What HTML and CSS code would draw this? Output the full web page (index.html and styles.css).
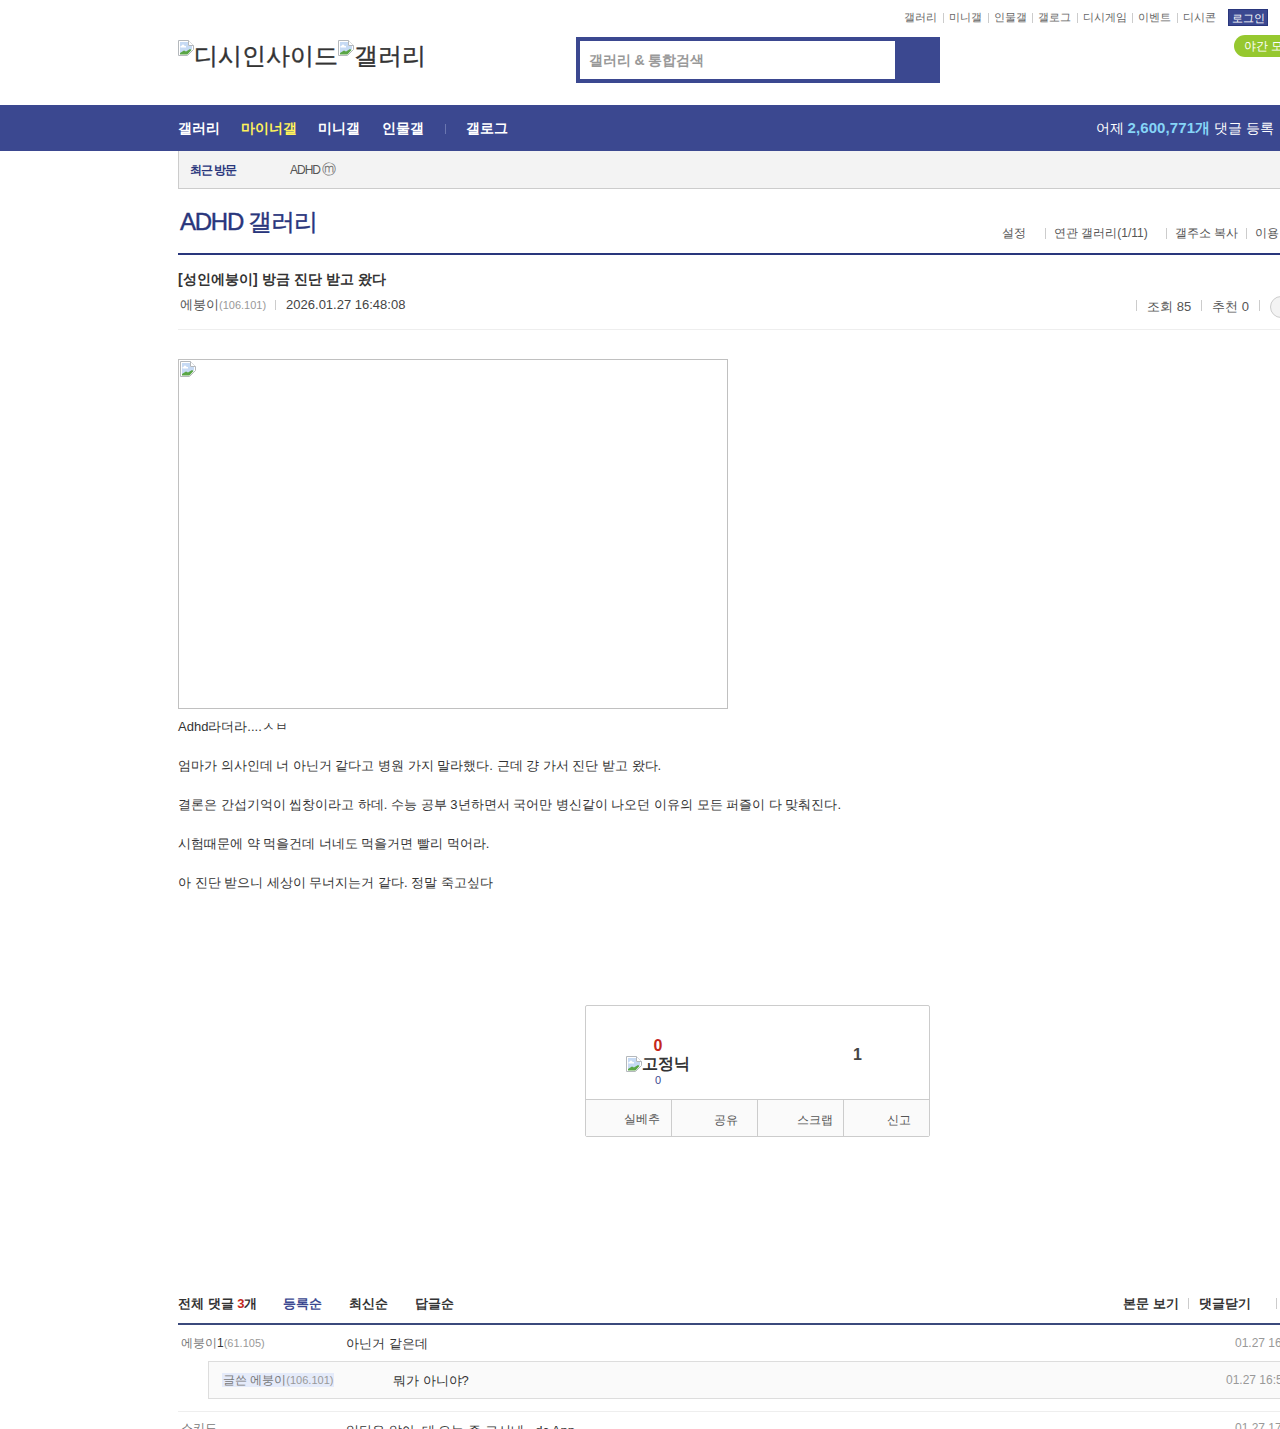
FILE: index.html
```html
<!DOCTYPE html>
<html lang="ko">
<head>
<meta charset="utf-8">
<title>ADHD 갤러리</title>
<link rel="stylesheet" href="styles.css">
</head>
<body>
<svg class="defs" width="0" height="0"><symbol id="broken" viewBox="0 0 16 16"><path d="M.5.5H10.5L15.5 5.5V9.5L9.5 15.5H.5Z" fill="#fff" stroke="#b4b8bc"/><path d="M2 2H10V6H14V9L9 14H2Z" fill="#c6daf4"/><path d="M3.5 6a1.5 1.5 0 0 1 3 0H8V7.5H2.5V6Z" fill="#fff"/><path d="M2 14.5V13L6 10.5L8 11.5L12 9L13.5 10L9.5 14.5Z" fill="#5aa646"/><path d="M10.5.5V5.5H15.5" fill="#fff" stroke="#b4b8bc"/></symbol></svg>
<header class="header">
  <div class="top-row">
    <nav class="top-links">
      <a>갤러리</a><a>미니갤</a><a>인물갤</a><a>갤로그</a><a>디시게임</a><a>이벤트</a><a>디시콘</a>
    </nav>
    <span class="login">로그인</span>
  </div>
  <div class="logo-row">
    <h1 class="logo"><svg class="ic"><use href="#broken"/></svg>디시인사이드<svg class="ic"><use href="#broken"/></svg>갤러리</h1>
    <form class="search"><span class="search-field">갤러리 &amp; 통합검색</span><span class="search-btn"></span></form>
    <span class="night">야간 모드</span>
  </div>
</header>
<nav class="gnb">
  <div class="gnb-links">
    <a>갤러리</a><a class="on">마이너갤</a><a>미니갤</a><a>인물갤</a><i class="gnb-sep"></i><a class="after-sep">갤로그</a>
  </div>
  <p class="gnb-stat">어제 <b>2,600,771개</b> 댓글 등록</p>
</nav>
<main class="wrap">
  <div class="recent"><strong>최근 방문</strong><span>ADHD<em>ⓜ</em></span></div>
  <div class="gall-head">
    <h2>ADHD 갤러리</h2>
    <ul class="gall-tools"><li>설정</li><li class="wide">연관 갤러리(1/11)</li><li class="addr">갤주소 복사</li><li>이용 안내</li></ul>
  </div>
  <section class="post-head">
    <h3>[성인에붕이] 방금 진단 받고 왔다</h3>
    <div class="post-meta">
      <p class="writer">에붕이<small>(106.101)</small><i></i><span>2026.01.27 16:48:08</span></p>
      <ul class="counts"><li>조회 85</li><li>추천 0</li><li class="c-btn"><span></span></li></ul>
    </div>
  </section>
  <article class="body">
    <div class="photo"><svg class="ic"><use href="#broken"/></svg></div>
    <p>Adhd라더라....ㅅㅂ</p>
    <p>엄마가 의사인데 너 아닌거 같다고 병원 가지 말라했다. 근데 걍 가서 진단 받고 왔다.</p>
    <p>결론은 간섭기억이 씹창이라고 하데. 수능 공부 3년하면서 국어만 병신같이 나오던 이유의 모든 퍼즐이 다 맞춰진다.</p>
    <p>시험때문에 약 먹을건데 너네도 먹을거면 빨리 먹어라.</p>
    <p>아 진단 받으니 세상이 무너지는거 같다. 정말 죽고싶다</p>
  </article>
  <section class="vote">
    <div class="vote-top">
      <div class="up"><b>0</b><span><svg class="ic"><use href="#broken"/></svg>고정닉</span><small>0</small></div>
      <div class="down">1</div>
    </div>
    <ul class="vote-btns"><li>실베추</li><li>공유</li><li>스크랩</li><li>신고</li></ul>
  </section>
  <section class="comments">
    <div class="c-head">
      <div class="c-left"><strong>전체 댓글 <em>3</em>개</strong><a class="on">등록순</a><a>최신순</a><a>답글순</a></div>
      <div class="c-right"><a>본문 보기</a><a class="sep">댓글닫기</a><a class="sep last">새로고침</a></div>
    </div>
    <div class="c-row">
      <span class="nick">에붕이<b>1</b><small>(61.105)</small></span>
      <span class="txt">아닌거 같은데</span>
      <span class="date">01.27 16:51:20</span>
    </div>
    <div class="c-reply">
      <span class="nick"><mark>글쓴 에붕이<small>(106.101)</small></mark></span>
      <span class="txt">뭐가 아니야?</span>
      <span class="date">01.27 16:52:47</span>
    </div>
    <div class="c-row next">
      <span class="nick">스키드</span>
      <span class="txt">일단은 앉아, 데 오늘 좀 고시네 - dc App</span>
      <span class="date">01.27 17:01:33</span>
    </div>
  </section>
</main>
</body>
</html>
```
FILE: styles.css
```css
* { box-sizing: border-box; }
html, body { margin: 0; height: 1429px; overflow: hidden; background: #fff; }
body { font: 13px/1.4 "Liberation Sans", sans-serif; color: #333; }
h1, h2, h3, p, ul { margin: 0; padding: 0; }
ul { list-style: none; }
a { color: inherit; }
i, em { font-style: normal; }
.defs { display: block; height: 0; }
.ic { display: inline-block; width: 16px; height: 16px; }

.header { height: 105px; width: 1340px; padding-left: 178px; }
.top-row { display: flex; justify-content: flex-end; width: 1090px; height: 37px; padding-top: 9px; }
.top-links { display: flex; font-size: 11px; line-height: 17px; color: #666; }
.top-links a + a { margin-left: 5.6px; padding-left: 6px; background: linear-gradient(#ccc, #ccc) left 4px / 1px 10px no-repeat; }
.login { margin-left: 12px; width: 40px; height: 17px; background: #3b4890; border: 1px solid #29367c; color: #fff; font-size: 11px; line-height: 17px; text-align: center; }
.logo-row { display: flex; align-items: flex-start; }
.logo { width: 398px; margin-top: 0; font-size: 24px; line-height: 37px; font-weight: 400; color: #333; white-space: nowrap; -webkit-text-stroke: .4px #333; }
.logo .ic { vertical-align: 8px; }
.search { display: flex; width: 364px; height: 46px; background: #3b4890; padding: 4px 0 2px 4px; }
.search-field { width: 315px; height: 38px; background: #fff; padding-left: 9px; font-size: 14px; font-weight: 700; line-height: 38px; letter-spacing: -.1px; color: #999; }
.night { margin: -2px 0 0 294px; width: 90px; height: 22px; border-radius: 11px; background: #96c82f; color: #fff; font-size: 12px; line-height: 22px; padding-left: 10px; white-space: nowrap; }

.gnb { display: flex; justify-content: space-between; align-items: center; height: 46px; background: #3b4890; padding: 2px 6px 0 178px; color: #fff; }
.gnb-links { display: flex; align-items: center; font-size: 14px; font-weight: 700; letter-spacing: .05px; }
.gnb-links a + a { margin-left: 21px; }
.gnb-links .on { color: #fff25a; }
.gnb-sep { width: 1px; height: 10px; background: #6a76b0; margin-left: 21px; margin-right: 20px; }
.gnb-links .after-sep { margin-left: 0; }
.gnb-stat { margin-top: -2px; font-size: 14px; }
.gnb-stat b { font-size: 15px; letter-spacing: .1px; color: #86d5f7; }

.wrap { width: 1160px; margin-left: 178px; }
.recent { display: flex; align-items: center; height: 38px; padding: 2px 0 0 11px; background: #f3f3f3; border-left: 1px solid #ccc; border-bottom: 1px solid #ccc; font-size: 12px; letter-spacing: -1px; }
.recent strong { width: 100px; color: #29367c; }
.recent em { color: #777; letter-spacing: 0; margin-left: 2px; font-size: 14px; line-height: 14px; }
.recent span { color: #555; }
.gall-head { display: flex; align-items: flex-end; height: 66px; border-bottom: 2px solid #29367c; }
.gall-head h2 { width: 792px; padding: 0 0 13px 2px; font-size: 24px; line-height: 36px; font-weight: 400; letter-spacing: -1.25px; color: #29367c; -webkit-text-stroke: .4px #29367c; }
.gall-tools { display: flex; height: 30px; padding: 2px 0 0 32px; font-size: 12px; line-height: 17px; color: #555; white-space: nowrap; }
.gall-tools li { margin-right: 9px; padding-left: 9px; background: linear-gradient(#ccc, #ccc) left 3px / 1px 11px no-repeat; }
.gall-tools li:first-child { width: 43px; margin-right: 0; background: none; padding-left: 0; }
.gall-tools .wide { margin-right: 18px; }
.gall-tools .addr { margin-right: 8px; }
.post-head { height: 75px; border-bottom: 1px solid #eee; }
.post-head h3 { padding-top: 14px; font-size: 14px; line-height: 20px; font-weight: 700; letter-spacing: .05px; }
.post-meta { display: flex; justify-content: space-between; }
.writer { margin-top: 7px; padding-left: 2px; line-height: 18px; color: #555; }
.writer small { font-size: 11px; color: #999; }
.writer i { display: inline-block; width: 1px; height: 10px; background: #ccc; margin: 0 10px 0 9px; vertical-align: -1px; }
.writer span { color: #444; }
.counts { display: flex; margin-top: 9px; line-height: 18px; color: #555; }
.counts li { padding: 0 10px 0 11px; background: linear-gradient(#ccc, #ccc) left 2px / 1px 11px no-repeat; }
.counts .c-btn { width: 79px; padding: 0 0 0 11px; }
.c-btn span { display: block; width: 40px; height: 22px; margin-top: -2px; border: 1px solid #ccc; border-radius: 11px; background: #f3f3f3; }
.body { padding-top: 29px; line-height: 20px; color: #333; }
.body p { margin-bottom: 19px; font-size: 13px; }
.photo { width: 550px; height: 350px; border: 1px solid #c0c0c0; padding: 1px; margin-bottom: 8px; line-height: 0; }
.vote { width: 345px; height: 132px; margin: 112px 0 0 407px; border: 1px solid #ccc; border-radius: 2px; }
.vote-top { display: flex; height: 93px; font-weight: 700; }
.up { flex: none; width: 144px; padding-top: 31px; display: flex; flex-direction: column; align-items: center; }
.up b { color: #c5281c; font-size: 16px; line-height: 18px; }
.up span { font-size: 16px; line-height: 17px; white-space: nowrap; }
.up span .ic { vertical-align: -3px; }
.up small { font-size: 11px; line-height: 16px; font-weight: 400; color: #3b4890; }
.down { padding: 39px 0 0 123px; font-size: 16px; line-height: 20px; color: #444; }
.vote-btns { display: flex; height: 37px; border-top: 1px solid #ccc; background: #fafafa; font-size: 12px; color: #555; }
.vote-btns li { flex: 0 0 86px; text-align: right; padding: 11px 18px 0 0; line-height: 18px; border-left: 1px solid #ccc; }
.vote-btns li:first-child { flex-basis: 85px; border-left: 0; padding: 10px 11px 0 0; }
.vote-btns li:nth-child(2) { padding-right: 19px; }
.vote-btns li:nth-child(3) { padding-right: 10px; }
.comments { margin-top: 153px; }
.c-head { display: flex; justify-content: space-between; height: 35px; border-bottom: 2px solid #3b4a7c; font-size: 13px; font-weight: 700; line-height: 20px; padding-top: 4px; color: #333; }
.c-left { display: flex; }
.c-left a { margin-left: 27px; }
.c-left .on { margin-left: 26px; color: #3b4890; }
.c-left strong em { color: #c5281c; }
.c-right { display: flex; width: 215px; white-space: nowrap; }
.c-right .sep { margin-left: 9px; padding-left: 11px; background: linear-gradient(#ccc, #ccc) left 4px / 1px 11px no-repeat; }
.c-right .last { margin-left: 25px; }
.c-row, .c-reply { display: flex; align-items: center; }
.c-row { height: 36px; padding: 0 0 0 3px; }
.nick { width: 165px; font-size: 12px; color: #777; }
.nick b { font-weight: 400; color: #333; }
.nick small { font-size: 11px; color: #999; }
.txt { padding-top: 2px; font-size: 13px; color: #333; }
.date { margin-left: auto; font-size: 12px; color: #999; }
.c-row .date { width: 103px; white-space: nowrap; }
.c-reply { width: 1160px; margin-left: 30px; height: 38px; padding-left: 13px; background: #fafafa; border: 1px solid #ddd; border-width: 1px 0 1px 1px; }
.c-reply .nick { width: 171px; }
.c-reply mark { background: #e5ebfa; color: #777; padding: 0 1px; }
.c-reply .date { width: 142px; }
.c-row.next { height: 36px; margin-top: 12px; border-top: 1px solid #eee; align-items: flex-start; padding-top: 8px; }
```
